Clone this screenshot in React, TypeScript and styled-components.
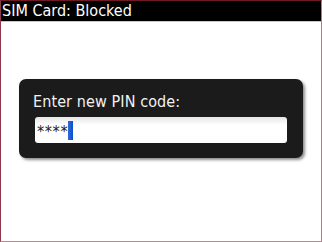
import React from 'react';
import styled, { createGlobalStyle } from 'styled-components';

const GlobalStyle = createGlobalStyle`
  html, body {
    margin: 0;
    padding: 0;
    background: #ffffff;
  }
  body {
    font-family: "DejaVu Sans Condensed", "DejaVu Sans", "Liberation Sans", sans-serif;
  }
`;

const Screen = styled.div`
  width: 322px;
  height: 242px;
  box-sizing: border-box;
  border: 1px solid #8c3a48;
  border-top-color: #6e1a24;
  border-bottom-color: #b48a96;
  border-right-color: #b07888;
  background: #ffffff;
  display: flex;
  flex-direction: column;
  overflow: hidden;
`;

const TitleBar = styled.div`
  height: 20px;
  background: #000000;
  border-bottom: 1px solid #c8c8c8;
  color: #ffffff;
  font-size: 16px;
  line-height: 20px;
  padding-left: 1px;
  white-space: nowrap;
`;

const Body = styled.div`
  flex: 1;
  padding: 57px 18px 0 18px;
`;

const Dialog = styled.div`
  width: 284px;
  height: 79px;
  box-sizing: border-box;
  background: #1b1b1b;
  border-radius: 7px;
  box-shadow: 2px 2px 3px rgba(0, 0, 0, 0.45);
  padding: 14px 15px 0 14px;
`;

const Label = styled.div`
  color: #f2f2f2;
  font-size: 16px;
  letter-spacing: 0.1px;
  line-height: 18px;
`;

const Field = styled.div`
  margin: 6px 0 0 2px;
  width: 252px;
  height: 26px;
  box-sizing: border-box;
  border-radius: 3px;
  background: linear-gradient(#e6e6e6, #ffffff 30%, #ffffff);
  display: flex;
  align-items: center;
  padding-left: 2px;
`;

const Masked = styled.span`
  color: #222222;
  font-size: 16px;
  letter-spacing: 0.6px;
  line-height: 18px;
  padding-top: 4px;
`;

const Caret = styled.span`
  display: inline-block;
  width: 5px;
  height: 19px;
  background: linear-gradient(90deg, #2a6be0, #0f4fc0);
`;

export default function App(): React.ReactElement {
  return (
    <>
      <GlobalStyle />
      <Screen>
        <TitleBar>SIM Card: Blocked</TitleBar>
        <Body>
          <Dialog>
            <Label>Enter new PIN code:</Label>
            <Field>
              <Masked>****</Masked>
              <Caret />
            </Field>
          </Dialog>
        </Body>
      </Screen>
    </>
  );
}
